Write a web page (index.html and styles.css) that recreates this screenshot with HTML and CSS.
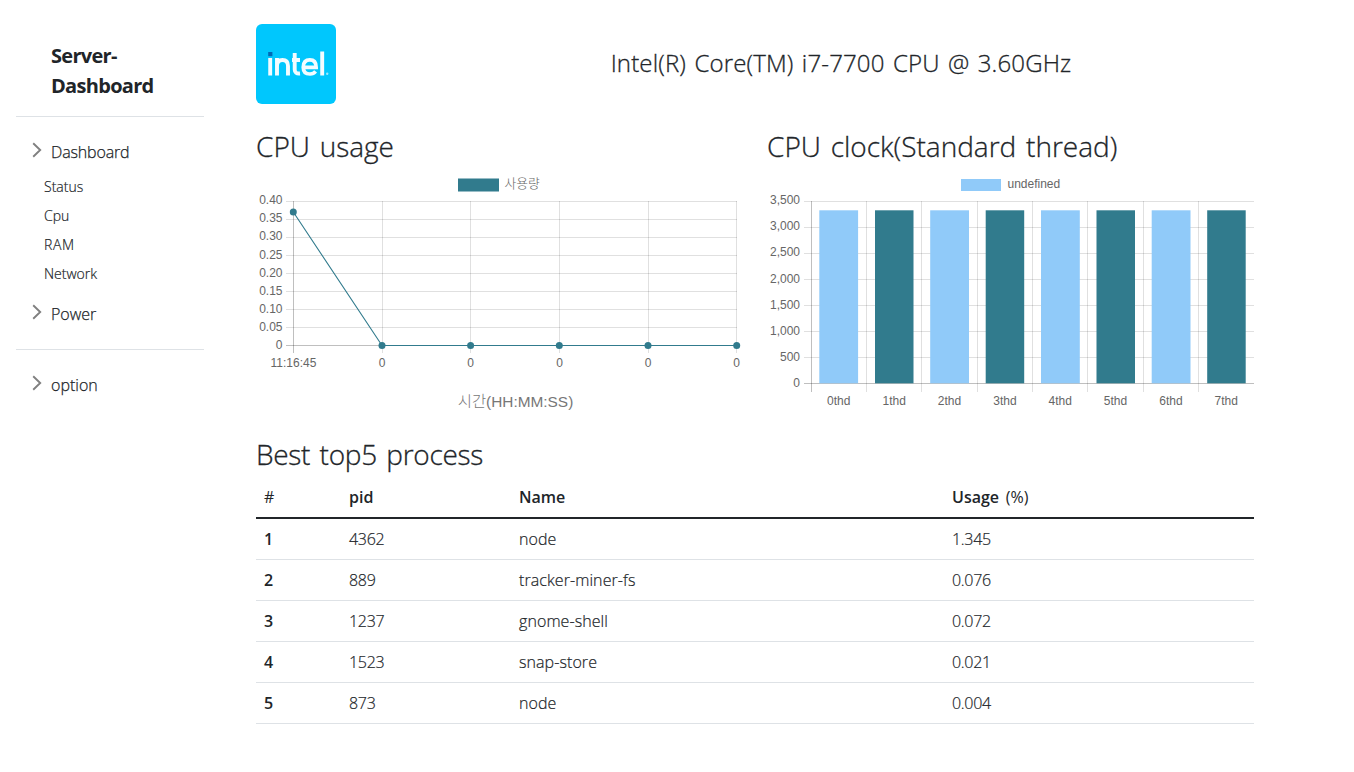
FILE: index.html
```html
<!DOCTYPE html>
<html lang="ko">
<head>
<meta charset="utf-8">
<title>Server-Dashboard</title>
<link rel="stylesheet" href="styles.css">
</head>
<body>
<div class="layout">
  <aside class="sidebar">
    <h1 class="brand">Server-<br>Dashboard</h1>
    <nav class="menu">
      <a class="menu-item"><svg class="chevron" viewBox="0 0 10 16"><path d="M1.2 1.2 8.2 8l-7 6.800"/></svg><span class="t-dashboard">Dashboard</span></a>
      <ul class="submenu">
        <li>Status</li>
        <li>Cpu</li>
        <li class="t-ram">RAM</li>
        <li>Network</li>
      </ul>
      <a class="menu-item"><svg class="chevron" viewBox="0 0 10 16"><path d="M1.2 1.2 8.2 8l-7 6.800"/></svg><span>Power</span></a>
    </nav>
    <nav class="menu menu-options">
      <a class="menu-item"><svg class="chevron" viewBox="0 0 10 16"><path d="M1.2 1.2 8.2 8l-7 6.800"/></svg><span>option</span></a>
    </nav>
  </aside>

  <main class="content">
    <header class="cpu-header">
      <svg class="logo" viewBox="0 0 80 80">
        <rect width="80" height="80" rx="6" fill="#00c7fd"/>
        <g fill="none" stroke="#f4fcff" stroke-width="3.900">
          <path d="M14.200 34v17.500M21 34v17.500M21 42q0-6 5.500-6t5.500 6v9.500M38.700 29v16.500q0 4.500 5.300 4M36 36h8"/>
          <path d="M47.500 43.400h12.700q0-7.500-6.400-7.500t-6.600 7.300q0 6.800 6.800 6.800 3.600 0 5.600-2.600" stroke-width="3.600"/>
          <path d="M66.200 27.500V51.500"/>
        </g>
        <rect x="12.200" y="28" width="4.200" height="4.200" fill="#0068b5"/>
        <circle cx="71.200" cy="49.800" r="1.200" fill="#9be8ff"/>
      </svg>
      <h2 class="cpu-name">Intel(R) Core(TM) i7-7700 CPU @ 3.60GHz</h2>
    </header>

    <div class="charts">
      <section>
        <h3 class="title">CPU usage</h3>
        <svg class="chart" viewBox="256 172 487 246">
          <rect x="458" y="178.500" width="41" height="13" fill="#317b8d"/>
          <text class="tick legend-ko" x="504.500" y="188">사용량</text>
          <path class="grid" d="M286 201.500H737M286 219.500H737M286 237.500H737M286 255.500H737M286 273.500H737M286 291.500H737M286 309.500H737M286 327.500H737"/>
          <path class="grid" d="M382.500 201V353M470.500 201V353M559.500 201V353M648.500 201V353M736.500 201V353"/>
          <path class="axis" d="M286 345.500H737M293.500 201V353"/>
          <path class="series" d="M293.300 212 382 345.500H737"/>
          <g fill="#317b8d">
            <circle cx="293.300" cy="212" r="3.500"/><circle cx="382" cy="345.500" r="3.500"/><circle cx="470.600" cy="345.500" r="3.500"/><circle cx="559.300" cy="345.500" r="3.500"/><circle cx="648" cy="345.500" r="3.500"/><circle cx="736.700" cy="345.500" r="3.500"/>
          </g>
          <g class="tick end">
            <text x="282.500" y="204">0.40</text><text x="282.500" y="222">0.35</text><text x="282.500" y="240">0.30</text><text x="282.500" y="259">0.25</text><text x="282.500" y="277">0.20</text><text x="282.500" y="295">0.15</text><text x="282.500" y="313">0.10</text><text x="282.500" y="331">0.05</text><text x="282.500" y="349">0</text>
          </g>
          <g class="tick middle">
            <text x="293.500" y="367">11:16:45</text><text x="382" y="367">0</text><text x="470.500" y="367">0</text><text x="559.500" y="367">0</text><text x="648" y="367">0</text><text x="736.500" y="367">0</text>
          </g>
          <text class="axis-title" x="515.500" y="407">시간(HH:MM:SS)</text>
        </svg>
      </section>
      <section>
        <h3 class="title">CPU clock(Standard thread)</h3>
        <svg class="chart" viewBox="767 172 487 246">
          <rect x="961" y="179" width="40" height="12" fill="#90caf9"/>
          <text class="tick" x="1007.500" y="188">undefined</text>
          <path class="grid" d="M804 201.500H1254M804 227.500H1254M804 253.500H1254M804 279.500H1254M804 305.500H1254M804 331.500H1254M804 357.500H1254"/>
          <path class="grid" d="M866.500 201V392M921.500 201V392M977.500 201V392M1032.500 201V392M1087.500 201V392M1143.500 201V392M1198.500 201V392"/>
          <path class="axis" d="M804 383.500H1254M811.500 201V392"/>
          <g fill="#90caf9">
            <rect x="819.300" y="210.300" width="38.800" height="173"/><rect x="930.200" y="210.300" width="38.800" height="173"/><rect x="1041" y="210.300" width="38.800" height="173"/><rect x="1151.700" y="210.300" width="38.800" height="173"/>
          </g>
          <g fill="#317b8d">
            <rect x="875" y="210.300" width="38.500" height="173"/><rect x="985.700" y="210.300" width="38.500" height="173"/><rect x="1096.500" y="210.300" width="38.500" height="173"/><rect x="1207.200" y="210.300" width="38.500" height="173"/>
          </g>
          <g class="tick end">
            <text x="800" y="204">3,500</text><text x="800" y="230">3,000</text><text x="800" y="256">2,500</text><text x="800" y="283">2,000</text><text x="800" y="309">1,500</text><text x="800" y="335">1,000</text><text x="800" y="361">500</text><text x="800" y="387">0</text>
          </g>
          <g class="tick middle">
            <text x="838.800" y="405">0thd</text><text x="894.300" y="405">1thd</text><text x="949.500" y="405">2thd</text><text x="1005" y="405">3thd</text><text x="1060.300" y="405">4thd</text><text x="1115.500" y="405">5thd</text><text x="1171" y="405">6thd</text><text x="1226.300" y="405">7thd</text>
          </g>
        </svg>
      </section>
    </div>

    <section class="processes">
      <h3 class="title">Best top5 process</h3>
      <table class="table">
        <colgroup><col class="c-rank"><col class="c-pid"><col class="c-name"><col></colgroup>
        <thead><tr><th class="light">#</th><th>pid</th><th>Name</th><th>Usage <span class="light">(%)</span></th></tr></thead>
        <tbody>
          <tr><th>1</th><td class="num">4362</td><td>node</td><td class="num">1.345</td></tr>
          <tr><th>2</th><td class="num">889</td><td>tracker-miner-fs</td><td class="num">0.076</td></tr>
          <tr><th>3</th><td class="num">1237</td><td>gnome-shell</td><td class="num">0.072</td></tr>
          <tr><th>4</th><td class="num">1523</td><td>snap-store</td><td class="num">0.021</td></tr>
          <tr><th>5</th><td class="num">873</td><td>node</td><td class="num">0.004</td></tr>
        </tbody>
      </table>
    </section>
  </main>
</div>
</body>
</html>
```
FILE: styles.css
```css
* { box-sizing: border-box; }
body {
  margin: 0;
  background: #fff;
  color: #212529;
  font: 400 16px/24px "Open Sans", "Noto Sans CJK KR", sans-serif;
}
.layout { display: flex; }
.sidebar { width: 220px; padding: 16px; flex: none; }
.brand {
  margin: 0;
  padding: 25px 0 15px 35px;
  height: 101px;
  border-bottom: 1px solid #dee2e6;
  font-size: 20px;
  line-height: 30px;
  font-weight: 700;
  letter-spacing: -.7px;
}
.menu { padding: 23px 16px 0; height: 233px; border-bottom: 1px solid #dee2e6; }
.menu-options { border: 0; }
.menu-item { display: flex; align-items: center; height: 24px; font-weight: 300; -webkit-text-stroke: .25px #212529; }
.t-dashboard { letter-spacing: -.15px; }
.t-ram { letter-spacing: .6px; }
.chevron { width: 10px; height: 16px; margin: 0 9px 4px 0; fill: none; stroke: #808080; stroke-width: 1.9; }
.submenu {
  list-style: none;
  margin: 8px 0 14px;
  padding: 0 0 0 12px;
  font-size: 14px;
  line-height: 29px;
}
.submenu li { font-weight: 300; -webkit-text-stroke: .2px #212529; }
.content { margin-left: 36px; width: 998px; padding-top: 24px; }
.cpu-header { display: flex; align-items: center; height: 80px; }
.logo { width: 80px; height: 80px; flex: none; }
.cpu-name {
  flex: 1;
  margin: 0 0 2px 92px;
  text-align: center;
  font-size: 24px;
  line-height: 30px;
  font-weight: 300;
  letter-spacing: .15px;
  word-spacing: 2px;
  -webkit-text-stroke: .3px #212529;
}
.charts { display: grid; grid-template-columns: 487px 487px; gap: 24px; padding-top: 25px; }
.title {
  margin: 0;
  height: 43px;
  font-size: 28px;
  line-height: 34px;
  font-weight: 300;
  word-spacing: 2.5px;
  -webkit-text-stroke: .3px #212529;
  white-space: nowrap;
}
.chart { display: block; width: 487px; height: 246px; }
.grid { stroke: rgba(0, 0, 0, .12); fill: none; }
.axis { stroke: rgba(0, 0, 0, .25); fill: none; }
.series { stroke: #317b8d; fill: none; stroke-width: 1.1; }
.tick { font: 12px "Liberation Sans", "Noto Sans CJK KR", sans-serif; fill: #666; }
.legend-ko { font-size: 12.8px; font-weight: 300; }
.end { text-anchor: end; }
.middle, .axis-title { text-anchor: middle; }
.axis-title { font: 300 15.4px "Liberation Sans", "Noto Sans CJK KR", sans-serif; fill: #777; }
.processes { padding-top: 19px; }
.processes .title { height: 40px; letter-spacing: -.3px; }
.table { width: 998px; table-layout: fixed; border-collapse: separate; border-spacing: 0; }
.c-rank { width: 85px; }
.c-pid { width: 170px; }
.c-name { width: 433px; }
.table th, .table td { height: 41px; padding: 8px; text-align: left; border-bottom: 1px solid #dee2e6; }
.table td { font-weight: 300; letter-spacing: .08px; -webkit-text-stroke: .2px #212529; }
.table td.num { letter-spacing: -.3px; }
.table th { font-weight: 600; word-spacing: 2.5px; }
.table thead th { height: 42px; border-bottom: 2px solid #212529; }
.table th.light, .light { font-weight: 400; }
```
